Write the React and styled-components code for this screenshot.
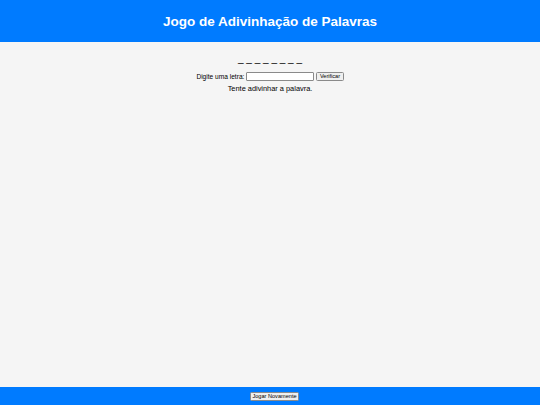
import React, { useState } from "react";
import styled, { createGlobalStyle } from "styled-components";

const Global = createGlobalStyle`
  html, body { margin: 0; padding: 0; height: 100%; }
  body { background: #f5f5f5; font-family: "Liberation Sans", Arial, sans-serif; }
  #root { min-height: 100%; }
`;

const Page = styled.div`
  display: flex;
  flex-direction: column;
  min-height: 100vh;
`;

const Header = styled.header`
  background: #007bff;
  height: 42px;
  display: flex;
  align-items: center;
  justify-content: center;
`;

const Title = styled.h1`
  margin: 0;
  color: #fff;
  font-size: 13.5px;
  font-weight: bold;
`;

const Main = styled.main`
  flex: 1;
  display: flex;
  flex-direction: column;
  align-items: center;
  padding-top: 10px;
`;

const Word = styled.div`
  font-size: 10px;
  line-height: 14px;
  color: #000;
`;

const Row = styled.div`
  display: flex;
  align-items: center;
  gap: 2px;
  margin-top: 6px;
  font-size: 6.6px;
  color: #000;
`;

const Input = styled.input`
  width: 68px;
  height: 9px;
  box-sizing: border-box;
  margin: 0;
  padding: 0;
  border: 1px solid #8a8a8a;
  border-radius: 1px;
  background: #fff;
`;

const Button = styled.button`
  font-family: "Liberation Sans", Arial, sans-serif;
  font-size: ${(p) => p.$size || "5.6px"};
  height: 9px;
  padding: 0 ${(p) => p.$pad || "3px"};
  margin: 0;
  line-height: 7px;
  color: #000;
  background: #efefef;
  border: 1px solid #8a8a8a;
  border-radius: 1.5px;
`;

const Message = styled.p`
  margin: 3px 0 0;
  font-size: 7.4px;
  color: #000;
`;

const Footer = styled.footer`
  background: #007bff;
  height: 18px;
  display: flex;
  align-items: center;
  justify-content: center;
  padding-left: 9px;
`;

export default function App() {
  const [letter, setLetter] = useState("");
  return (
    <Page>
      <Global />
      <Header>
        <Title>Jogo de Adivinhação de Palavras</Title>
      </Header>
      <Main>
        <Word>_ _ _ _ _ _ _ _</Word>
        <Row>
          <label htmlFor="letra">Digite uma letra:</label>
          <Input id="letra" value={letter} onChange={(e) => setLetter(e.target.value)} />
          <Button $pad="2.5px">Verificar</Button>
        </Row>
        <Message>Tente adivinhar a palavra.</Message>
      </Main>
      <Footer>
        <Button $size="5.6px" $pad="1.5px">Jogar Novamente</Button>
      </Footer>
    </Page>
  );
}
